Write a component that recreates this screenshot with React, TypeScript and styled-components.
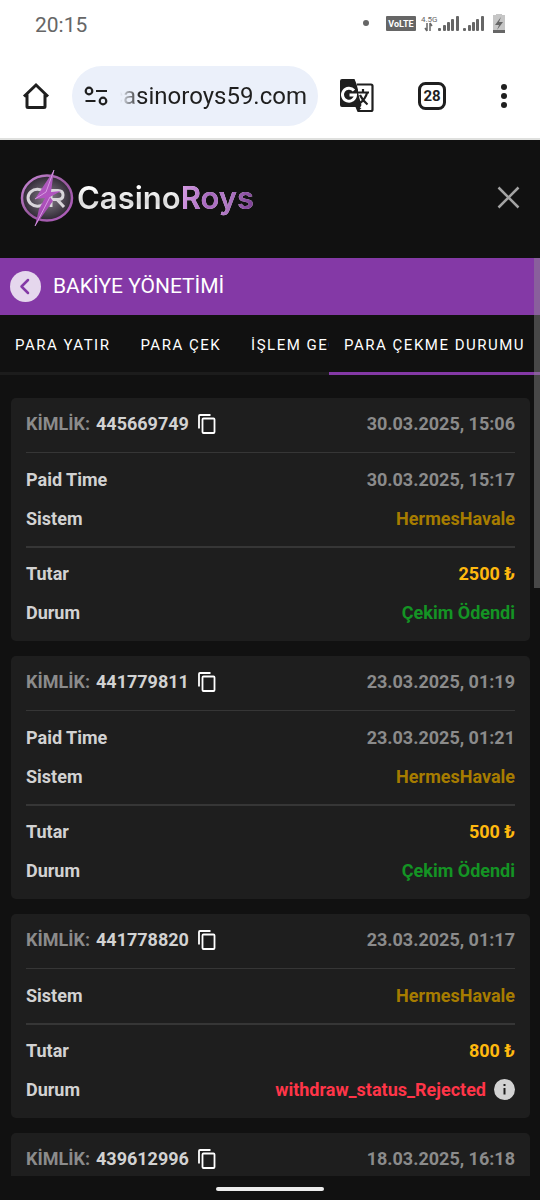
import React from 'react';
import styled, { createGlobalStyle } from 'styled-components';

const GlobalStyle = createGlobalStyle`
  *, *::before, *::after { box-sizing: border-box; }
  body { margin: 0; background: #111; font-family: Roboto, sans-serif; }
  button, input { font: inherit; color: inherit; background: none; border: 0; padding: 0; margin: 0; }
  button { cursor: pointer; }
  svg { display: block; flex: none; }
`;

const Screen = styled.div`
  display: flex;
  flex-direction: column;
  height: 100vh;
  background: #111;
`;

const StatusBar = styled.div`
  display: flex;
  align-items: center;
  height: 50px;
  padding: 0 34px 0 35px;
  background: #fff;
  color: #666;
`;

const Clock = styled.time`
  flex: 1;
  font-size: 21px;
  line-height: 24px;
`;

const BrowserBar = styled.header`
  display: flex;
  align-items: center;
  height: 90px;
  padding-top: 4px;
  background: #fff;
  color: #1f1f1f;
  border-bottom: 2px solid #dfe0de;
`;

const BarButton = styled.button<{ $w: number }>`
  display: flex;
  flex: none;
  align-items: center;
  justify-content: center;
  width: ${p => p.$w}px;
  height: 60px;
`;

const AddressPill = styled.div`
  display: flex;
  flex: 1;
  min-width: 0;
  align-items: center;
  height: 60px;
  padding: 0 11px 0 12px;
  border-radius: 30px;
  background: #ebf0fa;
`;

const AddressClip = styled.div`
  display: flex;
  flex: 1;
  min-width: 0;
  justify-content: flex-end;
  overflow: hidden;
  margin-left: 12px;
  mask-image: linear-gradient(to right, transparent 0, #000 20px);
`;

const AddressInput = styled.input`
  flex: none;
  width: 220px;
  font-size: 24px;
  line-height: 32px;
  text-align: right;
  outline: none;
`;

const SiteHeader = styled.div`
  display: flex;
  align-items: center;
  justify-content: space-between;
  height: 118px;
  padding: 0 20px 3px;
  color: #a3a3a3;
`;

const Brand = styled.a`
  display: flex;
  align-items: center;
  gap: 2px;
  text-decoration: none;
`;

const Wordmark = styled.span`
  font-family: Inter, sans-serif;
  font-size: 31px;
  line-height: 40px;
  font-weight: 600;
  color: transparent;
  background: linear-gradient(#fff 25%, #d8d8d8 60%, #f4f4f4 80%);
  background-clip: text;
`;

const WordmarkAccent = styled.span`
  background: linear-gradient(100deg, #d9a0e6, #a566bd 40%, #b47cc8 60%, #77398f);
  background-clip: text;
`;

const CloseButton = styled.button`
  padding: 5px 0;
`;

const Panel = styled.main`
  position: relative;
  flex: 1;
  min-height: 0;
`;

const PanelScroll = styled.div`
  height: 100%;
  overflow-y: auto;
  scrollbar-width: none;
`;

const ScrollThumb = styled.div`
  position: absolute;
  top: 0;
  right: 0;
  width: 6px;
  height: 36%;
  background: rgba(144, 144, 144, 0.44);
`;

const TitleBar = styled.div`
  display: flex;
  align-items: center;
  gap: 12px;
  height: 57px;
  padding: 0 10px;
  background: #8439a6;
  color: #fff;
`;

const BackButton = styled.button`
  display: flex;
  align-items: center;
  justify-content: center;
  width: 31px;
  height: 31px;
  border-radius: 50%;
  background: #e5d7ed;
  color: #8439a6;
`;

const Title = styled.h1`
  margin: 0;
  padding-bottom: 2px;
  font-size: 21px;
  line-height: 28px;
  font-weight: 400;
`;

const TabBar = styled.nav`
  display: flex;
  height: 60px;
`;

const TabStrip = styled.div`
  display: flex;
  flex: 1;
  min-width: 0;
  overflow: hidden;
`;

const Tab = styled.button<{ $active?: boolean }>`
  flex: none;
  padding: 3px 15px 0;
  border-bottom: 3px solid ${p => (p.$active ? '#8439a6' : '#1c1c1c')};
  font-size: 15px;
  line-height: 20px;
  letter-spacing: 1.5px;
  white-space: nowrap;
  color: #fff;
`;

const CardList = styled.div`
  display: flex;
  flex-direction: column;
  gap: 15px;
  padding: 23px 10px 23px 11px;
`;

const Card = styled.article`
  padding: 0 15px 9px;
  border-radius: 5px;
  background: #1e1e1e;
  font-size: 18px;
  line-height: 24px;
  font-weight: 700;
`;

const CardHead = styled.div`
  display: flex;
  align-items: center;
  justify-content: space-between;
  height: 55px;
  padding-bottom: 2px;
  border-bottom: 1px solid #363636;
  color: #8b8b8b;
`;

const CardId = styled.div`
  display: flex;
  align-items: center;
  gap: 6px;
`;

const IdValue = styled.span`
  color: #d2d2d2;
`;

const CopyButton = styled.button`
  margin-left: 3px;
  color: #fff;
`;

const Details = styled.div`
  padding: 7px 0 8px;
  border-bottom: 2px solid #363636;
`;

const Totals = styled.div`
  padding-top: 6px;
`;

const Row = styled.div`
  display: flex;
  align-items: center;
  justify-content: space-between;
  height: 39px;
  color: #d2d2d2;
`;

const tones = {
  muted: '#8b8b8b',
  system: '#a67c00',
  amount: '#ffb90f',
  paid: '#149424',
  rejected: '#ff3548',
};

const Value = styled.span<{ $tone: keyof typeof tones }>`
  display: flex;
  align-items: center;
  gap: 8px;
  color: ${p => tones[p.$tone]};
`;

const InfoButton = styled.button`
  color: #d2d2d2;
`;

const NavBar = styled.footer`
  display: flex;
  align-items: center;
  justify-content: center;
  height: 24px;
  padding-top: 2px;
`;

const HomeHandle = styled.div`
  width: 20%;
  height: 4px;
  border-radius: 2px;
  background: #ececec;
`;

const StatusIcons = () => (
  <svg width="144" height="24" viewBox="0 0 144 24" fill="#666" aria-hidden="true">
    <circle cx="4" cy="10" r="3" />
    <rect x="24" y="3" width="30" height="15" rx="1" />
    <text x="39" y="14" fontFamily="Roboto" fontSize="9" fontWeight="700" fill="#fff" textAnchor="middle">VoLTE</text>
    <text x="59" y="9" fontFamily="Roboto" fontSize="8">4.5G</text>
    <path d="M65 10v8M63 15l2 3M68 18v-8M70 13l-2-3" stroke="#666" strokeWidth="1.5" fill="none" />
    {[76, 101].map(x => (
      <g key={x}>
        <rect x={x} y="15" width="3" height="3" rx="1" />
        <rect x={x + 5} y="12" width="3" height="6" rx="1" />
        <rect x={x + 9} y="9" width="3" height="9" rx="1" />
        <rect x={x + 13} y="6" width="3" height="12" rx="1" />
        <rect x={x + 18} y="3" width="3" height="15" rx="1" />
      </g>
    ))}
    <path d="M134 1h6v1h3v18h-12V2h3z" fill="#c6c6c6" />
    <rect x="131" y="17" width="12" height="3" />
    <path d="M139 4l-6 8h4l-2 5 6-8h-4z" />
  </svg>
);

const HomeIcon = () => (
  <svg width="28" height="28" viewBox="0 0 28 28" fill="none" stroke="#1f1f1f" strokeWidth="3">
    <path d="M2 14.5L14 3l12 11.500M5 12.500V24.500q0 1 1 1H22q1 0 1-1V12.500" />
  </svg>
);

const SiteInfoIcon = () => (
  <svg width="24" height="20" viewBox="0 0 24 20" fill="none" stroke="#1f1f1f" strokeWidth="2.2">
    <circle cx="5" cy="5" r="3.3" />
    <path d="M12 5h11M1.500 15h10" />
    <circle cx="19" cy="15" r="3.3" />
  </svg>
);

const TranslateIcon = () => (
  <svg width="34" height="34" viewBox="0 0 34 34">
    <path d="M17 5.500h14q1.500 0 1.500 1.500v23.500q0 1.500-1.500 1.500H18" fill="#fff" stroke="#1f1f1f" strokeWidth="2.2" />
    <path d="M2 0h12.500l2 5 6 23-5 5-2-5H2q-2 0-2-2V2q0-2 2-2z" fill="#1f1f1f" />
    <path d="M14 11.500A6.500 6.500 0 1 0 15.500 16H9.500" fill="none" stroke="#fff" strokeWidth="3" />
    <path d="M18 13.500l1.500 6 2 6.500-1.500 3 10 0V10h-12z" fill="#fff" />
    <path d="M17.500 13.500H29M23 10v3.500M27 14q-1.500 6-7.500 10.500M20 16q2.500 5.500 7.500 9.500" fill="none" stroke="#1f1f1f" strokeWidth="2.2" />
  </svg>
);

const TabCountIcon = () => (
  <svg width="28" height="28" viewBox="0 0 28 28">
    <rect x="1.5" y="1.5" width="25" height="25" rx="6" fill="none" stroke="#1f1f1f" strokeWidth="3" />
    <text x="14" y="19" fontFamily="Roboto" fontSize="15" fontWeight="700" fill="#1f1f1f" textAnchor="middle">28</text>
  </svg>
);

const MenuIcon = () => (
  <svg width="8" height="26" viewBox="0 0 8 26" fill="#1f1f1f">
    <circle cx="4" cy="4" r="3" />
    <circle cx="4" cy="13" r="3" />
    <circle cx="4" cy="22" r="3" />
  </svg>
);

const Emblem = () => (
  <svg width="55" height="60" viewBox="0 0 55 60" aria-hidden="true">
    <defs>
      <radialGradient id="disc"><stop offset="0" stopColor="#8b838f" /><stop offset="1" stopColor="#2f2834" /></radialGradient>
      <linearGradient id="ring" x2="1" y2="1"><stop offset="0" stopColor="#c98ad8" /><stop offset=".5" stopColor="#99599f" /><stop offset="1" stopColor="#b45fc2" /></linearGradient>
      <linearGradient id="bolt" x2="0" y2="1"><stop offset="0" stopColor="#a55ab5" /><stop offset=".45" stopColor="#b254c0" /><stop offset="1" stopColor="#9a48a8" /></linearGradient>
    </defs>
    <ellipse cx="27" cy="30" rx="25" ry="22.500" fill="url(#disc)" stroke="url(#ring)" strokeWidth="2.5" />
    <g fill="none" stroke="#d9d6db" strokeWidth="3">
      <path d="M24 23.500A9.500 8.500 0 1 0 24 36" />
      <path d="M31 39V22.500h7q5 0 5 4.500t-5 4.500h-6M37 31.500l7 7.500" />
    </g>
    <path d="M34 2L15 31l10-1-6 11-4 17 18-25-3-4 11-6-10 1z" fill="url(#bolt)" />
    <path d="M34 2l-8 22-11 7M30 29L15 58" fill="none" stroke="#d79be2" />
  </svg>
);

const CloseIcon = () => (
  <svg width="23" height="23" viewBox="0 0 23 23" fill="none" stroke="currentColor" strokeWidth="2.5">
    <path d="M1.500 1.500l20 20M21.500 1.500l-20 20" />
  </svg>
);

const BackIcon = () => (
  <svg width="17" height="17" viewBox="0 0 17 17" fill="none" stroke="currentColor" strokeWidth="2.5" strokeLinecap="round" strokeLinejoin="round">
    <path d="M11 2L4.500 8.500 11 15" />
  </svg>
);

const CopyIcon = () => (
  <svg width="18" height="20" viewBox="0 0 18 20" fill="none" stroke="currentColor" strokeWidth="1.8">
    <path d="M1 14.500V2q0-1 1-1h10.500" />
    <rect x="4.5" y="4.5" width="12" height="14.5" rx="1" />
  </svg>
);

const InfoIcon = () => (
  <svg width="21" height="21" viewBox="0 0 21 21">
    <circle cx="10.5" cy="10.5" r="10.5" fill="currentColor" />
    <rect x="9.5" y="5" width="2" height="2" fill="#1e1e1e" />
    <rect x="9.5" y="9" width="2" height="6.5" fill="#1e1e1e" />
  </svg>
);

type Withdrawal = { id: string; date: string; paid?: string; amount: string; rejected?: boolean };

const withdrawals: Withdrawal[] = [
  { id: '445669749', date: '30.03.2025, 15:06', paid: '30.03.2025, 15:17', amount: '2500 ₺' },
  { id: '441779811', date: '23.03.2025, 01:19', paid: '23.03.2025, 01:21', amount: '500 ₺' },
  { id: '441778820', date: '23.03.2025, 01:17', amount: '800 ₺', rejected: true },
  { id: '439612996', date: '18.03.2025, 16:18', amount: '800 ₺', rejected: true },
];

const WithdrawalCard = ({ item }: { item: Withdrawal }) => (
  <Card>
    <CardHead>
      <CardId>
        <span>KİMLİK:</span>
        <IdValue>{item.id}</IdValue>
        <CopyButton aria-label="Kopyala"><CopyIcon /></CopyButton>
      </CardId>
      <span>{item.date}</span>
    </CardHead>
    <Details>
      {item.paid && <Row><span>Paid Time</span><Value $tone="muted">{item.paid}</Value></Row>}
      <Row><span>Sistem</span><Value $tone="system">HermesHavale</Value></Row>
    </Details>
    <Totals>
      <Row><span>Tutar</span><Value $tone="amount">{item.amount}</Value></Row>
      <Row>
        <span>Durum</span>
        {item.rejected ? (
          <Value $tone="rejected">
            withdraw_status_Rejected
            <InfoButton aria-label="Bilgi"><InfoIcon /></InfoButton>
          </Value>
        ) : (
          <Value $tone="paid">Çekim Ödendi</Value>
        )}
      </Row>
    </Totals>
  </Card>
);

export default function App() {
  return (
    <Screen>
      <GlobalStyle />
      <StatusBar>
        <Clock>20:15</Clock>
        <StatusIcons />
      </StatusBar>
      <BrowserBar>
        <BarButton $w={72} aria-label="Home"><HomeIcon /></BarButton>
        <AddressPill>
          <SiteInfoIcon />
          <AddressClip>
            <AddressInput aria-label="Address" defaultValue="casinoroys59.com" />
          </AddressClip>
        </AddressPill>
        <BarButton $w={78} aria-label="Translate"><TranslateIcon /></BarButton>
        <BarButton $w={72} aria-label="Tabs"><TabCountIcon /></BarButton>
        <BarButton $w={72} aria-label="Menu"><MenuIcon /></BarButton>
      </BrowserBar>
      <SiteHeader>
        <Brand href="#">
          <Emblem />
          <Wordmark>Casino<WordmarkAccent>Roys</WordmarkAccent></Wordmark>
        </Brand>
        <CloseButton aria-label="Kapat"><CloseIcon /></CloseButton>
      </SiteHeader>
      <Panel>
        <PanelScroll>
          <TitleBar>
            <BackButton aria-label="Geri"><BackIcon /></BackButton>
            <Title>BAKİYE YÖNETİMİ</Title>
          </TitleBar>
          <TabBar>
            <TabStrip>
              <Tab>PARA YATIR</Tab>
              <Tab>PARA ÇEK</Tab>
              <Tab>İŞLEM GEÇMİŞİ</Tab>
            </TabStrip>
            <Tab $active>PARA ÇEKME DURUMU</Tab>
          </TabBar>
          <CardList>
            {withdrawals.map(item => <WithdrawalCard key={item.id} item={item} />)}
          </CardList>
        </PanelScroll>
        <ScrollThumb />
      </Panel>
      <NavBar><HomeHandle /></NavBar>
    </Screen>
  );
}
